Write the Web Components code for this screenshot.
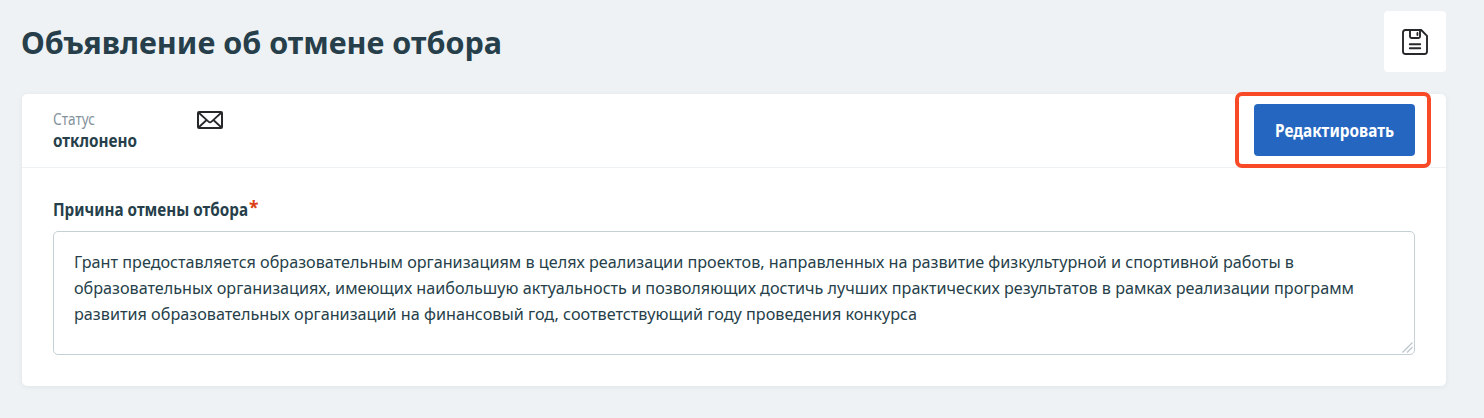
<!DOCTYPE html>
<html lang="ru">
<head>
<meta charset="utf-8">
<title>Объявление об отмене отбора</title>
<style>
  html, body { margin: 0; height: 418px; overflow: hidden; background: #eef2f5; }
  body { font-family: "Noto Sans", "Open Sans", sans-serif; color: #263f4a; }
</style>
</head>
<body>
<notice-page></notice-page>
<script>
// One line of text, condensed or widened horizontally to a given measure.
class FitText extends HTMLElement {
  connectedCallback() {
    const root = this.attachShadow({ mode: "open" });
    root.innerHTML = `
      <style>
        :host { display: block; white-space: nowrap; }
        span { display: inline-block; vertical-align: top; transform-origin: 0 50%; }
      </style><span><slot></slot></span>`;
    const measure = Number(this.getAttribute("measure"));
    this.style.width = measure + "px";
    const span = root.querySelector("span");
    const natural = span.getBoundingClientRect().width;
    if (natural) span.style.transform = `scaleX(${measure / natural})`;
  }
}

class SaveButton extends HTMLElement {
  constructor() {
    super();
    this.attachShadow({ mode: "open" }).innerHTML = `
      <style>
        :host { display: flex; align-items: center; justify-content: center; width: 62px; height: 61px;
          box-sizing: border-box; background: #fff; border-radius: 4px; }
        svg { display: block; }
      </style>
      <svg width="26" height="26" viewBox="0 0 26 26" fill="none" stroke="#26282a" stroke-width="1.9" stroke-linecap="round" stroke-linejoin="round">
        <path d="M3 1H19.2L25 6.8V22.5Q25 25 22.5 25H3.5Q1 25 1 22.5V3.5Q1 1 3.5 1"/>
        <path d="M8 1V7.6Q8 9 9.4 9H16.6Q18 9 18 7.6V1" />
        <path d="M15.4 4V6" stroke-width="1.8"/>
        <path d="M7.8 15.2H18.2M7.8 19.2H18.2"/>
      </svg>`;
  }
}

class MailIcon extends HTMLElement {
  constructor() {
    super();
    this.attachShadow({ mode: "open" }).innerHTML = `
      <style>:host { display: block; } svg { display: block; }</style>
      <svg width="26" height="18" viewBox="0 0 26 18" fill="none" stroke="#26282a" stroke-linejoin="round">
        <rect x="1" y="1" width="24" height="16" rx="1" stroke-width="2"/>
        <path d="M1.5 1.5L11.5 10.6Q13 11.9 14.5 10.6L24.5 1.5M1.5 16.5L9.6 9M24.5 16.5L16.4 9" stroke-width="1.8"/>
      </svg>`;
  }
}

class PrimaryButton extends HTMLElement {
  constructor() {
    super();
    this.attachShadow({ mode: "open" }).innerHTML = `
      <style>
        :host { display: block; position: relative; width: 161px; height: 52px; }
        button { display: flex; align-items: center; justify-content: center; width: 100%; height: 100%;
          padding: 2px 0 0; border: 0; border-radius: 4px; background: #2567c0; color: #fff;
          font: 700 17px/26px "Noto Sans", sans-serif; }
        .mark { position: absolute; inset: -12px -16px -12px -19px; box-sizing: border-box;
          border: 4px solid #f94a28; border-radius: 7px; pointer-events: none; }
      </style>
      <button><slot></slot></button><div class="mark"></div>`;
  }
}

class TextField extends HTMLElement {
  constructor() {
    super();
    this.attachShadow({ mode: "open" }).innerHTML = `
      <style>
        :host { display: block; position: relative; box-sizing: border-box; height: 124px; padding: 17px 19.5px;
          border: 1px solid #c4d0d6; border-radius: 5px; background: #fff; font-size: 17px; line-height: 26px; }
        svg { position: absolute; right: 1px; bottom: 1px; }
      </style>
      <slot></slot>
      <svg width="11" height="11" viewBox="0 0 11 11" stroke="#b9c4cb" stroke-width="1.1"><path d="M.5 10.5L10.5 .5M5 10.5L10.5 5"/></svg>`;
  }
}

class NoticeCard extends HTMLElement {
  constructor() {
    super();
    this.attachShadow({ mode: "open" }).innerHTML = `
      <style>
        :host { display: block; box-sizing: border-box; height: 292px; background: #fff; border-radius: 5px;
          box-shadow: 0 1px 5px rgba(38, 63, 74, .07); }
        header { display: flex; align-items: flex-start; height: 74px; box-sizing: border-box;
          padding: 10px 31px 0; border-bottom: 1px solid #edf1f3; }
        .status { width: 144px; padding-top: 4px; }
        .caption { font-size: 15.5px; line-height: 22px; color: #84939b; }
        .value { font-weight: 700; font-size: 17px; line-height: 22px; }
        mail-icon { padding-top: 7px; }
        primary-button { margin-left: auto; }
        section { padding: 29px 31px 0; }
        .label { display: flex; height: 34px; font-weight: 700; font-size: 17px; line-height: 26px; }
        .star { margin-left: 1px; color: #db4114; font-size: 18px; line-height: 20px; }
      </style>
      <header>
        <div class="status">
          <fit-text class="caption" measure="42">Статус</fit-text>
          <fit-text class="value" measure="84">отклонено</fit-text>
        </div>
        <mail-icon></mail-icon>
        <primary-button><fit-text measure="119">Редактировать</fit-text></primary-button>
      </header>
      <section>
        <div class="label"><fit-text measure="195">Причина отмены отбора</fit-text><fit-text class="star" measure="9.5">*</fit-text></div>
        <text-field>
          <fit-text measure="1220">Грант предоставляется образовательным организациям в целях реализации проектов, направленных на развитие физкультурной и спортивной работы в</fit-text>
          <fit-text measure="1280">образовательных организациях, имеющих наибольшую актуальность и позволяющих достичь лучших практических результатов в рамках реализации программ</fit-text>
          <fit-text measure="843">развития образовательных организаций на финансовый год, соответствующий году проведения конкурса</fit-text>
        </text-field>
      </section>`;
  }
}

class NoticePage extends HTMLElement {
  constructor() {
    super();
    this.attachShadow({ mode: "open" }).innerHTML = `
      <style>
        :host { display: block; padding: 11px 38px 0 22px; }
        .top { display: flex; justify-content: space-between; height: 83px; }
        h1 { margin: 0 0 0 -1px; padding-top: 11px; font-size: 31px; line-height: 40px; font-weight: 700; }
      </style>
      <div class="top">
        <h1><fit-text measure="481">Объявление об отмене отбора</fit-text></h1>
        <save-button></save-button>
      </div>
      <notice-card></notice-card>`;
  }
}

customElements.define("fit-text", FitText);
customElements.define("save-button", SaveButton);
customElements.define("mail-icon", MailIcon);
customElements.define("primary-button", PrimaryButton);
customElements.define("text-field", TextField);
customElements.define("notice-card", NoticeCard);
customElements.define("notice-page", NoticePage);
</script>
</body>
</html>
